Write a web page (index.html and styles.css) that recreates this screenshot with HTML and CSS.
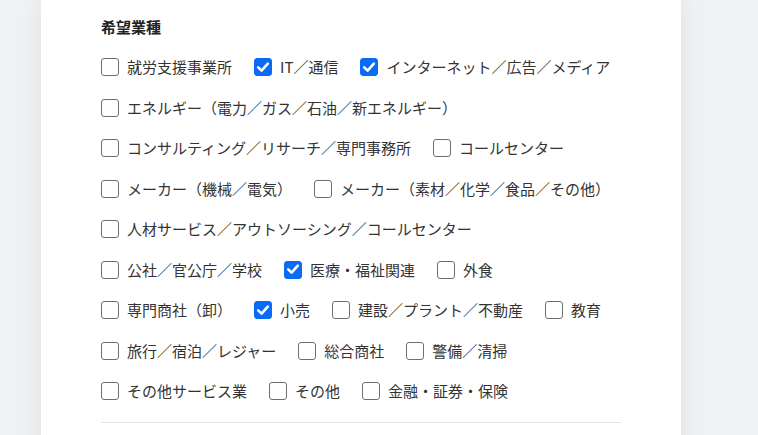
FILE: index.html
```html
<!DOCTYPE html>
<html lang="ja">
<head>
<meta charset="utf-8">
<title>希望業種</title>
<link rel="stylesheet" href="styles.css">
</head>
<body>
<div class="page">
  <div class="card">
    <h2 class="title">希望業種</h2>
    <div class="options">
      <label class="opt"><span class="box"></span><span class="lbl">就労支援事業所</span></label>
      <label class="opt"><span class="box on"><svg viewBox="0 0 18 18"><path d="M4.2 9.4 L7.6 12.6 L13.8 5.6"/></svg></span><span class="lbl">IT／通信</span></label>
      <label class="opt"><span class="box on"><svg viewBox="0 0 18 18"><path d="M4.2 9.4 L7.6 12.6 L13.8 5.6"/></svg></span><span class="lbl">インターネット／広告／メディア</span></label>
      <label class="opt"><span class="box"></span><span class="lbl">エネルギー（電力／ガス／石油／新エネルギー）</span></label>
      <label class="opt"><span class="box"></span><span class="lbl">コンサルティング／リサーチ／専門事務所</span></label>
      <label class="opt"><span class="box"></span><span class="lbl">コールセンター</span></label>
      <label class="opt"><span class="box"></span><span class="lbl">メーカー（機械／電気）</span></label>
      <label class="opt"><span class="box"></span><span class="lbl">メーカー（素材／化学／食品／その他）</span></label>
      <label class="opt"><span class="box"></span><span class="lbl">人材サービス／アウトソーシング／コールセンター</span></label>
      <label class="opt"><span class="box"></span><span class="lbl">公社／官公庁／学校</span></label>
      <label class="opt"><span class="box on"><svg viewBox="0 0 18 18"><path d="M4.2 9.4 L7.6 12.6 L13.8 5.6"/></svg></span><span class="lbl">医療・福祉関連</span></label>
      <label class="opt"><span class="box"></span><span class="lbl">外食</span></label>
      <label class="opt"><span class="box"></span><span class="lbl">専門商社（卸）</span></label>
      <label class="opt"><span class="box on"><svg viewBox="0 0 18 18"><path d="M4.2 9.4 L7.6 12.6 L13.8 5.6"/></svg></span><span class="lbl">小売</span></label>
      <label class="opt"><span class="box"></span><span class="lbl">建設／プラント／不動産</span></label>
      <label class="opt"><span class="box"></span><span class="lbl">教育</span></label>
      <label class="opt"><span class="box"></span><span class="lbl">旅行／宿泊／レジャー</span></label>
      <label class="opt"><span class="box"></span><span class="lbl">総合商社</span></label>
      <label class="opt"><span class="box"></span><span class="lbl">警備／清掃</span></label>
      <label class="opt"><span class="box"></span><span class="lbl">その他サービス業</span></label>
      <label class="opt"><span class="box"></span><span class="lbl">その他</span></label>
      <label class="opt"><span class="box"></span><span class="lbl">金融・証券・保険</span></label>
    </div>
    <div class="divider"></div>
  </div>
</div>
</body>
</html>
```

FILE: styles.css
```css
html, body {
  margin: 0;
  padding: 0;
  background: #f0f1f3;
  font-family: "Noto Sans CJK JP", "Noto Sans", sans-serif;
  color: #333;
}
.page {
  width: 758px;
  height: 435px;
  overflow: hidden;
  padding-left: 41px;
  box-sizing: border-box;
}
.card {
  width: 640px;
  min-height: 460px;
  background: #fff;
  box-sizing: border-box;
  padding: 16px 60px 0 60px;
  box-shadow: 0 0 22px rgba(0, 0, 0, 0.07);
}
.title {
  margin: 0;
  font-size: 15px;
  line-height: 22px;
  font-weight: 700;
  color: #222;
}
.options {
  display: flex;
  flex-wrap: wrap;
  column-gap: 22px;
  row-gap: 18.5px;
  margin-top: 18px;
}
.opt {
  display: flex;
  align-items: center;
  height: 22px;
  cursor: pointer;
}
.box {
  width: 18px;
  height: 18px;
  box-sizing: border-box;
  border: 1.5px solid #6f6f6f;
  border-radius: 3px;
  background: #fff;
  margin-right: 8px;
  flex: none;
  display: flex;
}
.box.on {
  background: #0a6cf5;
  border-color: #0a6cf5;
}
.box svg {
  width: 18px;
  height: 18px;
  margin: -1.5px;
  fill: none;
  stroke: #fff;
  stroke-width: 2.6;
  stroke-linecap: round;
  stroke-linejoin: round;
}
.lbl {
  font-size: 15px;
  line-height: 22px;
  white-space: nowrap;
}
.divider {
  height: 1px;
  background: #e3e3e3;
  margin-top: 20px;
}
```
